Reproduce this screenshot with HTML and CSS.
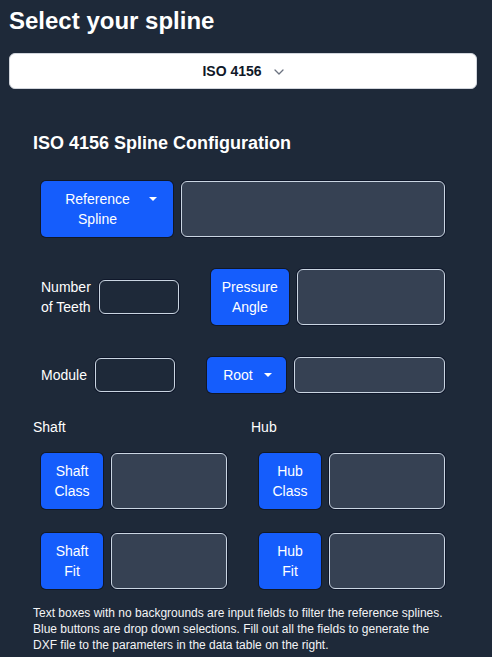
FILE: index.html
```html
<!DOCTYPE html>
<html lang="en">
<head>
<meta charset="utf-8">
<title>Select your spline</title>
<link rel="stylesheet" href="styles.css">
</head>
<body>
<div class="page">
  <h1 class="title">Select your spline</h1>
  <button class="select" type="button">
    <span>ISO 4156</span>
    <svg class="chevron" width="10" height="6" viewBox="0 0 10 6"><path d="M1 1 L5 5 L9 1" fill="none" stroke="#6b7280" stroke-width="1.3" stroke-linecap="round" stroke-linejoin="round"/></svg>
  </button>

  <section class="panel">
    <h2 class="panel-title">ISO 4156 Spline Configuration</h2>

    <div class="rows">
      <div class="row">
        <button class="dd dd-ref" type="button"><span class="dd-inner"><span class="dd-text">Reference Spline</span><span class="caret"></span></span></button>
        <div class="field grow tall"></div>
      </div>

      <div class="row">
        <div class="pair">
          <span class="label">Number<br>of Teeth</span>
          <div class="field small"></div>
        </div>
        <div class="pair grow">
          <button class="dd dd-pressure" type="button">Pressure Angle</button>
          <div class="field grow tall"></div>
        </div>
      </div>

      <div class="row">
        <div class="pair">
          <span class="label">Module</span>
          <div class="field small"></div>
        </div>
        <div class="pair grow">
          <button class="dd dd-root" type="button"><span class="dd-inner"><span class="dd-text">Root</span><span class="caret"></span></span></button>
          <div class="field grow short"></div>
        </div>
      </div>
    </div>

    <div class="cols">
      <div class="col">
        <div class="col-label">Shaft</div>
        <div class="col-rows">
          <div class="row">
            <button class="dd dd-sq" type="button">Shaft Class</button>
            <div class="field grow tall"></div>
          </div>
          <div class="row">
            <button class="dd dd-sq" type="button">Shaft Fit</button>
            <div class="field grow tall"></div>
          </div>
        </div>
      </div>
      <div class="col">
        <div class="col-label">Hub</div>
        <div class="col-rows">
          <div class="row">
            <button class="dd dd-sq" type="button">Hub Class</button>
            <div class="field grow tall"></div>
          </div>
          <div class="row">
            <button class="dd dd-sq" type="button">Hub Fit</button>
            <div class="field grow tall"></div>
          </div>
        </div>
      </div>
    </div>

    <p class="note">Text boxes with no backgrounds are input fields to filter the reference splines. Blue buttons are drop down selections. Fill out all the fields to generate the DXF file to the parameters in the data table on the right.</p>
  </section>
</div>
</body>
</html>
```

FILE: styles.css
```css
html, body {
  margin: 0;
  padding: 0;
  background: #1e2939;
}

body {
  font-family: "Liberation Sans", Arial, sans-serif;
  color: #ffffff;
}

.page {
  width: 468px;
  padding: 7px 0 0 9px;
}

.title {
  margin: 0;
  font-size: 24px;
  line-height: 28px;
  font-weight: bold;
  color: #ffffff;
}

.select {
  margin-top: 18px;
  width: 468px;
  height: 36px;
  display: flex;
  align-items: center;
  justify-content: center;
  gap: 12px;
  background: #ffffff;
  border: 1px solid #d1d5dc;
  border-radius: 6px;
  font-family: "Liberation Sans", Arial, sans-serif;
  font-size: 14px;
  font-weight: bold;
  color: #101828;
  padding: 0;
}

.chevron {
  display: block;
  margin-top: 1px;
}

.panel {
  padding: 42px 24px 0 24px;
}

.panel-title {
  margin: 0;
  font-size: 18px;
  line-height: 24px;
  font-weight: bold;
}

.rows {
  margin-top: 26px;
  padding: 0 8px;
  display: flex;
  flex-direction: column;
  gap: 32px;
}

.row {
  display: flex;
  align-items: center;
  gap: 8px;
}

.rows > .row:nth-child(n+2) {
  gap: 32px;
}

.pair {
  display: flex;
  align-items: center;
  gap: 8px;
}

.grow {
  flex: 1;
}

.label {
  font-size: 14px;
  line-height: 20px;
  white-space: nowrap;
}

.field {
  box-sizing: border-box;
  border: 1px solid #cad5e2;
  border-radius: 6px;
  box-shadow: 0 0 0 1px #0f172a;
}

.field.tall {
  height: 56px;
  background: #364153;
}

.field.short {
  height: 36px;
  background: #364153;
}

.field.small {
  width: 80px;
  height: 34px;
  background: transparent;
}

.dd {
  box-sizing: border-box;
  display: flex;
  align-items: center;
  justify-content: center;
  background: #155dfc;
  color: #ffffff;
  border: 0;
  border-radius: 5px;
  box-shadow: 0 0 0 1px #111827;
  font-family: "Liberation Sans", Arial, sans-serif;
  font-size: 14px;
  line-height: 20px;
  text-align: center;
  padding: 8px 11px;
}

.dd-inner {
  display: flex;
  align-items: flex-start;
  width: 100%;
}

.dd-text {
  flex: 1;
  text-align: center;
}

.caret {
  flex: none;
  width: 0;
  height: 0;
  margin-top: 8px;
  margin-left: 11px;
  border-left: 4px solid transparent;
  border-right: 4px solid transparent;
  border-top: 4px solid #ffffff;
}

.dd-ref {
  width: 132px;
  height: 56px;
  padding: 8px 16px;
}

.dd-pressure {
  width: 78px;
  height: 56px;
}

.dd-root {
  width: 79px;
  height: 36px;
  padding: 8px 14px 8px 16px;
}

.dd-sq {
  width: 62px;
  height: 56px;
  padding: 8px 12px;
}

.cols {
  margin-top: 24px;
  display: grid;
  grid-template-columns: 202px 202px;
  column-gap: 16px;
}

.col-label {
  font-size: 14px;
  line-height: 20px;
}

.col-rows {
  margin-top: 16px;
  padding: 0 8px;
  display: flex;
  flex-direction: column;
  gap: 24px;
}

.note {
  margin: 16px 0 0 0;
  font-size: 12px;
  line-height: 16px;
  color: #f3f4f6;
}
```
